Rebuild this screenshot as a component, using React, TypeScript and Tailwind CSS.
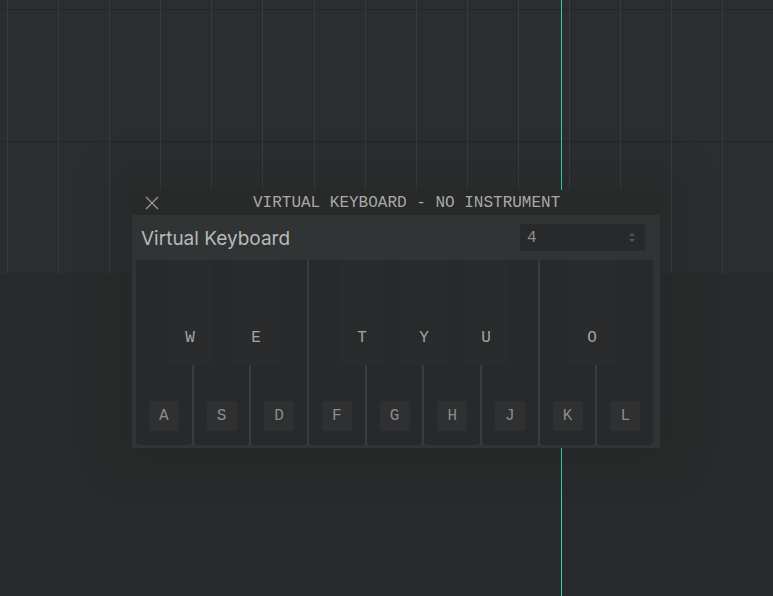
import React from "react";

const mono = { fontFamily: '"Liberation Mono", "DejaVu Sans Mono", monospace' };
const sans = { fontFamily: 'Inter, "Noto Sans", sans-serif' };

const whiteKeys = ["A", "S", "D", "F", "G", "H", "J", "K", "L"];
const blackKeys = [
  { label: "W", left: 31 },
  { label: "E", left: 97 },
  { label: "T", left: 203 },
  { label: "Y", left: 265 },
  { label: "U", left: 327 },
  { label: "O", left: 433 },
];

export default function App() {
  const cols = Array.from({ length: 15 });
  return (
    <div className="relative w-[773px] h-[596px] overflow-hidden bg-[#292a2b]">
      {/* arrangement grid */}
      <div className="relative h-[273px] bg-[#2c2d2e] flex flex-col">
        <div className="h-[9px]" />
        <div className="h-[132px] border-t border-[#242526]" />
        <div className="flex-1 border-t border-[#242526]" />
        <div className="absolute inset-0 flex pl-[7px]">
          {cols.map((_, i) => (
            <div key={i} className="w-[51.1px] shrink-0 border-l border-[#383a3b]" />
          ))}
        </div>
      </div>

      {/* playhead */}
      <div className="absolute left-[561px] top-0 bottom-0 w-px bg-[#2fd3b2]" />

      {/* dialog */}
      <div className="absolute left-[132px] top-[190px] w-[528px] flex flex-col shadow-[0_0_45px_20px_rgba(0,0,0,0.08)]">
        <div className="h-[25px] bg-[#282929] flex items-center">
          <svg className="ml-[13px]" width="14" height="14" viewBox="0 0 14 14">
            <path d="M1 1L13 13M13 1L1 13" stroke="#9a9a9a" strokeWidth="1.2" />
          </svg>
          <span className="ml-[94px] text-[16px] leading-[16px] text-[#a8a8a8] pt-[1px]" style={mono}>
            VIRTUAL KEYBOARD - NO INSTRUMENT
          </span>
        </div>
        <div className="bg-[#313435] flex flex-col pb-[3px]">
          <div className="h-[45px] flex items-center justify-between pl-[9px] pr-[15px]">
            <span className="text-[19px] leading-[24px] text-[#b9b9b9] pt-[2px]" style={sans}>
              Virtual Keyboard
            </span>
            <div className="w-[125px] h-[27px] bg-[#28292a] flex items-center justify-between pl-[7px] pr-[9px]">
              <span className="text-[16px] text-[#8e8e8e]" style={mono}>4</span>
              <svg width="8" height="11" viewBox="0 0 8 11">
                <path d="M1 4L4 1L7 4Z" fill="#555859" />
                <path d="M1 7L4 10L7 7Z" fill="#555859" />
              </svg>
            </div>
          </div>
          <div className="relative ml-[4px] mr-[7px] h-[185px] flex gap-[2px] bg-[#393c3d]">
            {whiteKeys.map((k) => (
              <div
                key={k}
                className="flex-1 bg-[#27292a] rounded-b-[3px] flex flex-col justify-end items-center pb-[14px]"
              >
                <div
                  className="w-[30px] h-[30px] bg-[#2e3031] rounded-[2px] flex items-center justify-center text-[16px] text-[#8c8c8c]"
                  style={mono}
                >
                  {k}
                </div>
              </div>
            ))}
            {blackKeys.map((b) => (
              <div
                key={b.label}
                className="absolute top-0 w-[46px] h-[105px] bg-[#292b2c] flex flex-col justify-end items-center pb-[19px]"
                style={{ left: b.left }}
              >
                <span className="text-[16px] leading-[16px] text-[#a5a5a5]" style={mono}>
                  {b.label}
                </span>
              </div>
            ))}
          </div>
        </div>
      </div>
    </div>
  );
}
